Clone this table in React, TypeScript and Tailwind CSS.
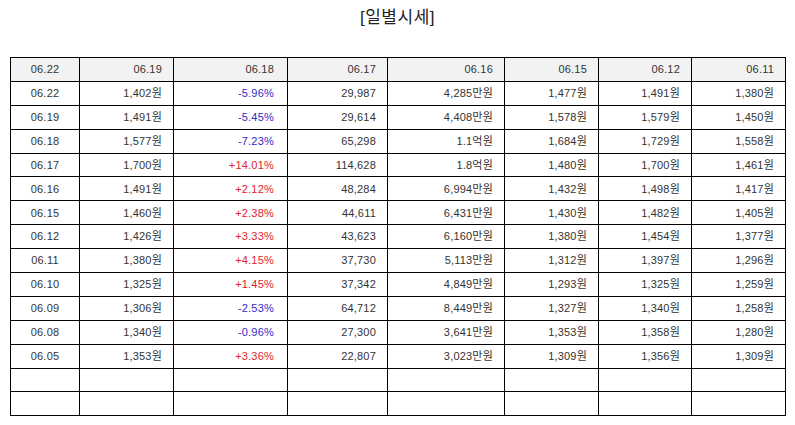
const headers = ['06.22', '06.19', '06.18', '06.17', '06.16', '06.15', '06.12', '06.11'];

const rows: string[][] = [
  ['06.22', '1,402원', '-5.96%', '29,987', '4,285만원', '1,477원', '1,491원', '1,380원'],
  ['06.19', '1,491원', '-5.45%', '29,614', '4,408만원', '1,578원', '1,579원', '1,450원'],
  ['06.18', '1,577원', '-7.23%', '65,298', '1.1억원', '1,684원', '1,729원', '1,558원'],
  ['06.17', '1,700원', '+14.01%', '114,628', '1.8억원', '1,480원', '1,700원', '1,461원'],
  ['06.16', '1,491원', '+2.12%', '48,284', '6,994만원', '1,432원', '1,498원', '1,417원'],
  ['06.15', '1,460원', '+2.38%', '44,611', '6,431만원', '1,430원', '1,482원', '1,405원'],
  ['06.12', '1,426원', '+3.33%', '43,623', '6,160만원', '1,380원', '1,454원', '1,377원'],
  ['06.11', '1,380원', '+4.15%', '37,730', '5,113만원', '1,312원', '1,397원', '1,296원'],
  ['06.10', '1,325원', '+1.45%', '37,342', '4,849만원', '1,293원', '1,325원', '1,259원'],
  ['06.09', '1,306원', '-2.53%', '64,712', '8,449만원', '1,327원', '1,340원', '1,258원'],
  ['06.08', '1,340원', '-0.96%', '27,300', '3,641만원', '1,353원', '1,358원', '1,280원'],
  ['06.05', '1,353원', '+3.36%', '22,807', '3,023만원', '1,309원', '1,356원', '1,309원'],
  ['', '', '', '', '', '', '', ''],
  ['', '', '', '', '', '', '', ''],
];

const widths = ['w-[69px]', 'w-[94px]', 'w-[114px]', 'w-[100px]', 'w-[117px]', 'w-[94px]', 'w-[93px]', 'w-[94px]'];

function changeColor(v: string) {
  if (v.startsWith('+')) return 'text-[#e0222e]';
  if (v.startsWith('-')) return 'text-[#2d2dcc]';
  return 'text-[#333]';
}

function align(ci: number) {
  if (ci === 0) return 'text-center';
  if (ci === 2) return 'text-right pr-[13px]';
  return 'text-right pr-[11px]';
}

export default function App() {
  return (
    <div className="w-[795px] h-[425px] bg-white font-['Liberation_Sans','Noto_Sans_CJK_KR',sans-serif]">
      <h1 className="pt-[5px] h-[57px] text-center text-[17px] tracking-[0.5px] text-[#222] font-normal">[일별시세]</h1>
      <table className="ml-[10px] w-[775px] border-collapse table-fixed text-[11px] tracking-[0.2px] text-[#333]">
        <colgroup>
          {widths.map((w, i) => (
            <col key={i} className={w} />
          ))}
        </colgroup>
        <thead>
          <tr className="bg-[#f2f2f2]">
            {headers.map((h, i) => (
              <th key={i} className={`h-[23.9px] border border-black font-normal p-0 ${align(i)}`}>
                {h}
              </th>
            ))}
          </tr>
        </thead>
        <tbody>
          {rows.map((r, ri) => (
            <tr key={ri}>
              {r.map((c, ci) => (
                <td
                  key={ci}
                  className={`h-[23.9px] border border-black p-0 ${align(ci)} ${ci === 2 ? changeColor(c) : ''}`}
                >
                  {c}
                </td>
              ))}
            </tr>
          ))}
        </tbody>
      </table>
    </div>
  );
}
